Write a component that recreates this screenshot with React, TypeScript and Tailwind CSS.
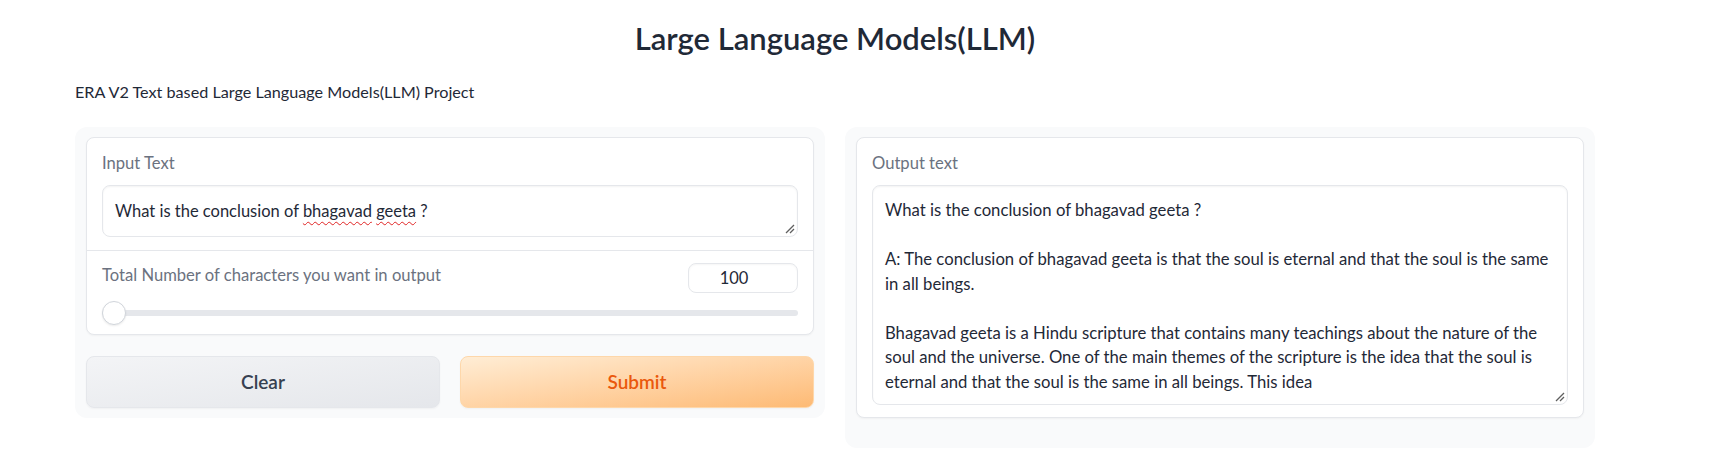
import React from "react";

function Grip() {
  return (
    <svg
      className="absolute right-[2px] bottom-[2px]"
      width="10"
      height="10"
      viewBox="0 0 10 10"
    >
      <line x1="9" y1="1" x2="1" y2="9" stroke="#5f5f5f" strokeWidth="1.2" />
      <line x1="9" y1="5" x2="5" y2="9" stroke="#5f5f5f" strokeWidth="1.2" />
    </svg>
  );
}

const outputText = [
  "What is the conclusion of bhagavad geeta ?",
  "",
  "A: The conclusion of bhagavad geeta is that the soul is eternal and that the soul is the same",
  "in all beings.",
  "",
  "Bhagavad geeta is a Hindu scripture that contains many teachings about the nature of the",
  "soul and the universe. One of the main themes of the scripture is the idea that the soul is",
  "eternal and that the soul is the same in all beings. This idea",
];

export default function App() {
  return (
    <div className="w-[1721px] h-[452px] overflow-hidden bg-white font-['Lato','Noto_Sans',sans-serif] text-[#1f2937]">
      <div className="ml-[75px] w-[1520px]">
        <h1 className="pt-[18px] text-center text-[31px] leading-[40px] font-semibold text-[#1f2937]">
          Large Language Models(LLM)
        </h1>
        <p className="mt-[22px] text-[16.2px] leading-[24px] text-[#1f2937]">
          ERA V2 Text based Large Language Models(LLM) Project
        </p>
        <div className="mt-[23px] flex items-start gap-[20px]">
          {/* Left column */}
          <div className="w-[750px] rounded-[12px] bg-[#f9fafb] px-[11px] py-[10px] flex flex-col gap-[21px]">
            <div className="rounded-[8px] border border-[#e5e7eb] bg-white shadow-[0_1px_2px_rgba(0,0,0,0.04)]">
              <div className="px-[15px] pt-[14px] pb-[13px] border-b border-[#e5e7eb]">
                <div className="h-[22px] leading-[22px] text-[16.6px] text-[#6b7280]">Input Text</div>
                <div className="relative mt-[11px] h-[52px] rounded-[8px] border border-[#e5e7eb] bg-white px-[12px] py-[13px] text-[16.5px] leading-[24px] text-[#1f2937] shadow-[inset_0_1px_2px_rgba(0,0,0,0.05)]">
                  What is the conclusion of{" "}
                  <span className="underline decoration-wavy decoration-[#e02424] decoration-1 underline-offset-[4px]">bhagavad</span>{" "}
                  <span className="underline decoration-wavy decoration-[#e02424] decoration-1 underline-offset-[4px]">geeta</span> ?
                  <Grip />
                </div>
              </div>
              <div className="px-[15px] pt-[12px] pb-[9px]">
                <div className="flex items-start justify-between">
                  <div className="mt-[1px] h-[22px] leading-[22px] text-[16.6px] text-[#6b7280]">
                    Total Number of characters you want in output
                  </div>
                  <div className="flex h-[30px] w-[110px] items-center justify-center rounded-[8px] border border-[#e5e7eb] bg-white pr-[18px] text-[16.5px] text-[#1f2937] shadow-[inset_0_1px_2px_rgba(0,0,0,0.04)]">
                    100
                  </div>
                </div>
                <div className="relative mt-[8px] flex h-[24px] items-center">
                  <div className="h-[6px] w-full rounded-full bg-[#e5e7eb]" />
                  <div className="absolute left-0 top-0 h-[24px] w-[24px] rounded-full border border-[#d1d5db] bg-white shadow-[0_1px_2px_rgba(0,0,0,0.08)]" />
                </div>
              </div>
            </div>
            <div className="flex gap-[20px]">
              <button className="h-[52px] flex-1 rounded-[8px] border border-[#e5e7eb] bg-linear-to-br from-[#f3f4f6] to-[#e5e7eb] text-[19px] font-semibold text-[#374151] shadow-[0_1px_2px_rgba(0,0,0,0.04)]">
                Clear
              </button>
              <button className="h-[52px] flex-1 rounded-[8px] border border-[#fed7aa] bg-linear-to-br from-[#ffedd5] to-[#fdba74] text-[19px] font-semibold text-[#ea580c] shadow-[0_1px_2px_rgba(0,0,0,0.04)]">
                Submit
              </button>
            </div>
          </div>
          {/* Right column */}
          <div className="w-[750px] rounded-[12px] bg-[#f9fafb] px-[11px] pt-[10px] pb-[30px]">
            <div className="rounded-[8px] border border-[#e5e7eb] bg-white px-[15px] pt-[14px] pb-[12px] shadow-[0_1px_2px_rgba(0,0,0,0.04)]">
              <div className="h-[22px] leading-[22px] text-[16.6px] text-[#6b7280]">Output text</div>
              <div className="relative mt-[11px] h-[220px] overflow-hidden rounded-[8px] border border-[#e5e7eb] bg-white px-[12px] py-[12px] text-[16.7px] leading-[24.5px] text-[#1f2937] whitespace-pre shadow-[inset_0_1px_2px_rgba(0,0,0,0.05)]">
                {outputText.join("\n")}
                <Grip />
              </div>
            </div>
          </div>
        </div>
      </div>
    </div>
  );
}
